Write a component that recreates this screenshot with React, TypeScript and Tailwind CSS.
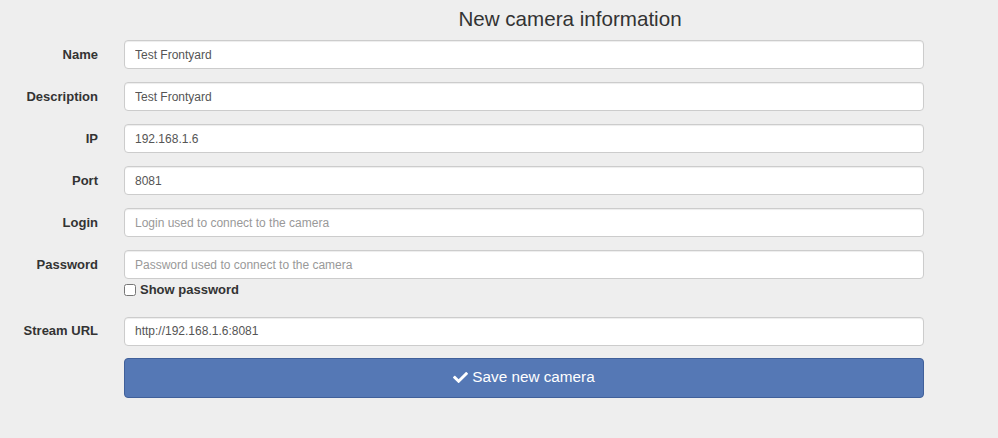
import { FaCheck } from 'react-icons/fa';

type Field = {
  label: string;
  value?: string;
  placeholder?: string;
};

const fields: Field[] = [
  { label: 'Name', value: 'Test Frontyard' },
  { label: 'Description', value: 'Test Frontyard' },
  { label: 'IP', value: '192.168.1.6' },
  { label: 'Port', value: '8081' },
  { label: 'Login', placeholder: 'Login used to connect to the camera' },
  { label: 'Password', placeholder: 'Password used to connect to the camera' },
];

function Row({ field }: { field: Field }) {
  return (
    <div className="flex items-center">
      <label className="w-[98px] text-right text-[13px] font-bold text-[#333]">{field.label}</label>
      <input
        readOnly
        defaultValue={field.value}
        placeholder={field.placeholder}
        className="ml-[26px] h-[29px] w-[800px] rounded-[4px] border border-[#cccccc] bg-white px-[10px] text-[12px] text-[#555] shadow-[inset_0_1px_1px_rgba(0,0,0,0.075)] outline-none placeholder:text-[#999]"
      />
    </div>
  );
}

export default function App() {
  return (
    <div className="min-h-[438px] w-[998px] bg-[#eeeeee] font-['Liberation_Sans',Arial,sans-serif]">
      {/* Title */}
      <div className="flex justify-center pl-[142px] pt-[7px]">
        <h1 className="text-[20.6px] leading-[24px] text-[#333]">New camera information</h1>
      </div>

      <div className="mt-[9px] flex flex-col gap-[13px]">
        {fields.map((f) => (
          <Row key={f.label} field={f} />
        ))}
      </div>

      <div className="ml-[124px] mt-[1px] flex items-center gap-[4px]">
        <input type="checkbox" className="h-[12px] w-[12px]" />
        <span className="text-[13px] font-bold text-[#333]">Show password</span>
      </div>

      <div className="mt-[17px]">
        <Row field={{ label: 'Stream URL', value: 'http://192.168.1.6:8081' }} />
      </div>

      <div className="ml-[124px] mt-[12px]">
        <button className="flex h-[40px] w-[800px] items-center justify-center gap-[4px] rounded-[4px] border border-[#40609a] bg-[#5578b5] text-[15.3px] text-white">
          <FaCheck className="h-[15px] w-[15px]" />
          <span>Save new camera</span>
        </button>
      </div>
    </div>
  );
}
